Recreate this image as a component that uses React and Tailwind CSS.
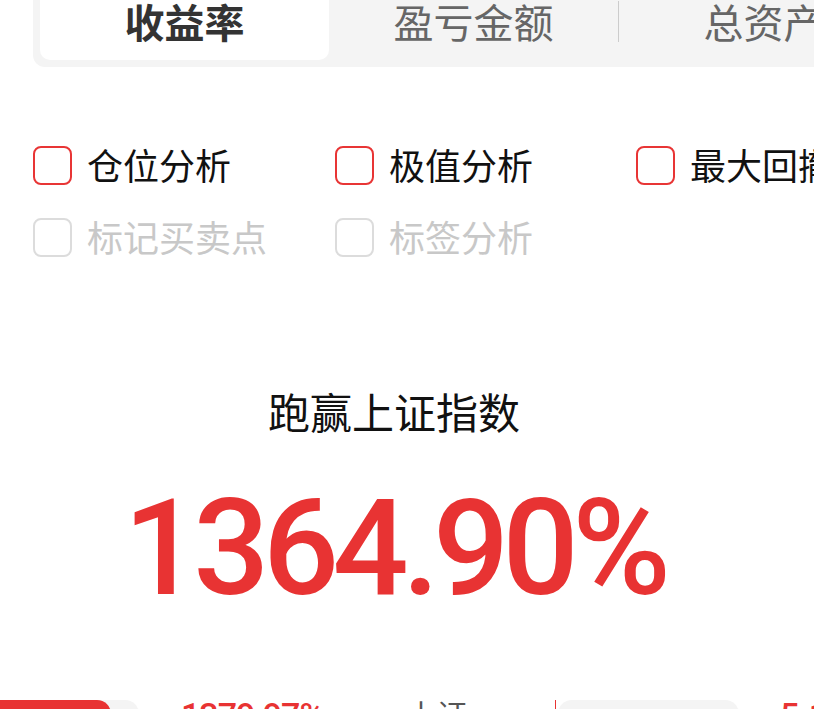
import React from "react";

const CJK = { fontFamily: '"Noto Sans CJK SC", "Noto Sans", sans-serif' };
const NUM = { fontFamily: 'Roboto, "Liberation Sans", sans-serif' };

function Check({ label, active }) {
  return (
    <div className="flex items-center h-[39px]">
      <div
        className={
          "w-[39px] h-[39px] rounded-[8px] border-2 shrink-0 " +
          (active ? "border-[#e83535]" : "border-[#dcdcdc]")
        }
      />
      <span
        className={
          "ml-[15px] text-[36px] leading-[39px] -mt-[3px] whitespace-nowrap " +
          (active ? "text-[#111]" : "text-[#c8c8c8]")
        }
      >
        {label}
      </span>
    </div>
  );
}

export default function App() {
  return (
    <div
      className="w-[814px] h-[709px] overflow-hidden bg-white relative"
      style={CJK}
    >
      {/* tabs */}
      <div className="ml-[33px] mt-[-25px] w-[900px] bg-[#f4f4f4] rounded-b-[12px] p-[7px] flex items-center">
        <div className="w-[289px] h-[78px] bg-white rounded-[10px] flex items-center justify-center text-[40px] leading-[48px] font-bold text-[#333]">
          收益率
        </div>
        <div className="w-[289px] h-[78px] flex items-center justify-center text-[40px] leading-[48px] text-[#666]">
          盈亏金额
        </div>
        <div className="w-px h-[41px] bg-[#cccccc]" />
        <div className="w-[289px] h-[78px] flex items-center justify-center text-[40px] leading-[48px] text-[#666]">
          总资产
        </div>
      </div>

      {/* checkboxes */}
      <div className="ml-[33px] mt-[79px] grid grid-cols-[302px_301px_200px] gap-y-[33px] w-[803px]">
        <Check label="仓位分析" active />
        <Check label="极值分析" active />
        <Check label="最大回撤" active />
        <Check label="标记买卖点" />
        <Check label="标签分析" />
      </div>

      {/* headline */}
      <div className="ml-[33px] w-[722px] flex flex-col items-center">
        <div className="mt-[133px] text-[42px] leading-[42px] text-[#111]">
          跑赢上证指数
        </div>
        <div
          className="mt-[50px] text-[134px] leading-[134px] font-medium text-[#e83333] tracking-[-6.5px]"
          style={NUM}
        >
          1364.90%
        </div>
      </div>

      {/* bottom row */}
      <div className="mt-[84px] flex items-start h-[40px]">
        <div className="w-[139px] h-[30px] bg-[#f4f4f4] rounded-r-[14px] flex shrink-0">
          <div className="w-[111px] h-[30px] bg-[#e83333] rounded-r-[14px]" />
        </div>
        <div className="ml-[42px] w-[226px] shrink-0">
          <div
            className="text-[34px] leading-[34px] font-medium text-[#e83333] tracking-[-1px] -mt-[2px]"
            style={NUM}
          >
            1379.97%
          </div>
        </div>
        <div className="w-[148px] shrink-0">
          <div className="text-[30px] leading-[30px] text-[#555] -mt-[2px]">上证</div>
        </div>
        <div className="w-px h-[30px] bg-[#e83333] shrink-0" />
        <div className="ml-[2px] w-[181px] h-[30px] bg-[#f4f4f4] rounded-[14px] shrink-0" />
        <div
          className="ml-[41px] text-[34px] leading-[34px] font-medium text-[#e83333] -mt-[2px]"
          style={NUM}
        >
          5.17%
        </div>
      </div>
    </div>
  );
}
